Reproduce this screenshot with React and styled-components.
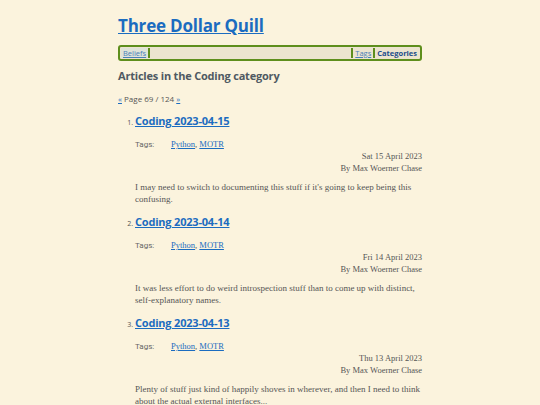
import styled, { createGlobalStyle } from "styled-components";

const GlobalStyle = createGlobalStyle`
  html, body {
    margin: 0;
    padding: 0;
    background: #fbf3dd;
  }
  body {
    font-family: "Liberation Serif", serif;
    color: #555;
  }
`;

const Page = styled.main`
  width: 304px;
  margin: 0 auto;
  padding-top: 14px;
`;

const Title = styled.h1`
  margin: 0 0 7px;
  font-family: "Open Sans", "Noto Sans", sans-serif;
  font-size: 17px;
  font-weight: 700;
  letter-spacing: -0.2px;
  line-height: 24px;

  a {
    color: #1b6cc0;
  }
`;

const Nav = styled.nav`
  display: flex;
  align-items: stretch;
  height: 10px;
  border: 2px solid #5e8e1c;
  border-radius: 3px;
  background: #ece4cf;
  padding: 1px;
  font-family: "Open Sans", "Noto Sans", sans-serif;
  font-size: 7.5px;
  line-height: 10px;
`;

const NavLink = styled.a`
  padding: 0 2px;
  color: ${({ $bold }) => ($bold ? "#1d4d8a" : "#4a7fb8")};
  font-weight: ${({ $bold }) => ($bold ? 700 : 400)};
  background: ${({ $hl }) => ($hl ? "#dfe3d8" : "transparent")};
  text-decoration: ${({ $bold }) => ($bold ? "none" : "underline")};
`;

const Sep = styled.span`
  width: 2px;
  background: #5e8e1c;
`;

const Spacer = styled.span`
  flex: 1;
`;

const Heading = styled.h2`
  margin: 7px 0 9px;
  font-family: "Open Sans", "Noto Sans", sans-serif;
  font-size: 11px;
  font-weight: 700;
  line-height: 16px;
  color: #4f5962;
  letter-spacing: -0.2px;
`;

const Pager = styled.p`
  margin: 0 0 8px;
  font-family: "Open Sans", "Noto Sans", sans-serif;
  font-size: 8px;
  line-height: 12px;
  color: #555;

  a {
    color: #1b6cc0;
  }
`;

const List = styled.ol`
  margin: 0;
  padding-left: 17px;
`;

const Item = styled.li`
  margin-bottom: 9px;

  &::marker {
    font-family: "Open Sans", "Noto Sans", sans-serif;
    font-size: 7px;
    color: #555;
  }
`;

const ItemTitle = styled.h3`
  margin: 0;
  font-family: "Open Sans", "Noto Sans", sans-serif;
  font-size: 11px;
  font-weight: 700;
  line-height: 16px;
  letter-spacing: -0.2px;

  a {
    color: #1b6cc0;
  }
`;

const Tags = styled.div`
  display: flex;
  align-items: baseline;
  height: 12px;
  margin-top: 9px;
  font-size: 8.5px;
  line-height: 12px;

  span {
    width: 36px;
    color: #666;
    font-family: "Roboto", "Liberation Sans", sans-serif;
    font-size: 8px;
  }

  a {
    color: #1b6cc0;
  }
`;

const Meta = styled.div`
  text-align: right;
  font-size: 8.5px;
  line-height: 12px;
  color: #555;
`;

const Summary = styled.p`
  margin: 7px 0 0;
  font-size: 9px;
  line-height: 12px;
  color: #555;
`;

const posts = [
  {
    title: "Coding 2023-04-15",
    date: "Sat 15 April 2023",
    summary:
      "I may need to switch to documenting this stuff if it's going to keep being this confusing.",
  },
  {
    title: "Coding 2023-04-14",
    date: "Fri 14 April 2023",
    summary:
      "It was less effort to do weird introspection stuff than to come up with distinct, self-explanatory names.",
  },
  {
    title: "Coding 2023-04-13",
    date: "Thu 13 April 2023",
    summary:
      "Plenty of stuff just kind of happily shoves in wherever, and then I need to think about the actual external interfaces...",
  },
];

export default function App() {
  return (
    <>
      <GlobalStyle />
      <Page>
        <Title>
          <a href="#">Three Dollar Quill</a>
        </Title>
        <Nav>
          <NavLink href="#" $hl>
            Beliefs
          </NavLink>
          <Sep />
          <Spacer />
          <Sep />
          <NavLink href="#">Tags</NavLink>
          <Sep />
          <NavLink href="#" $bold>
            Categories
          </NavLink>
        </Nav>
        <Heading>Articles in the Coding category</Heading>
        <Pager>
          <a href="#">«</a> Page 69 / 124 <a href="#">»</a>
        </Pager>
        <List>
          {posts.map((post) => (
            <Item key={post.title}>
              <ItemTitle>
                <a href="#">{post.title}</a>
              </ItemTitle>
              <Tags>
                <span>Tags:</span>
                <div>
                  <a href="#">Python</a>, <a href="#">MOTR</a>
                </div>
              </Tags>
              <Meta>
                {post.date}
                <br />
                By Max Woerner Chase
              </Meta>
              <Summary>{post.summary}</Summary>
            </Item>
          ))}
        </List>
      </Page>
    </>
  );
}
